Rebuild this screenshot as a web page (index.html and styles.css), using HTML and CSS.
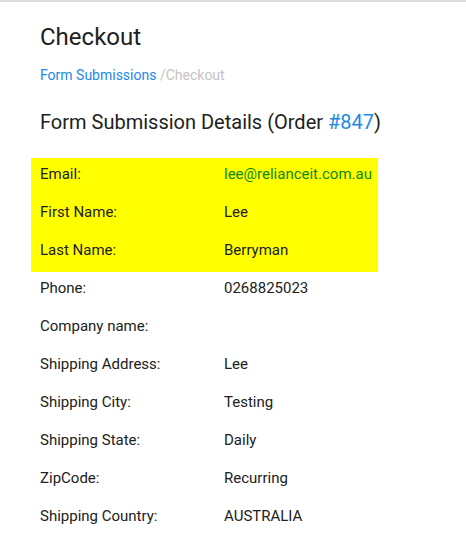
FILE: index.html
```html
<!DOCTYPE html>
<html lang="en">
<head>
<meta charset="utf-8">
<title>Checkout</title>
<link rel="stylesheet" href="styles.css">
</head>
<body>
<div class="topbar"></div>
<main class="page">
  <h1 class="title">Checkout</h1>
  <nav class="crumbs"><a class="crumb-link" href="#">Form Submissions</a> <span class="crumb-current">/Checkout</span></nav>
  <h2 class="subtitle">Form Submission Details (Order <a class="order-link" href="#">#847</a>)</h2>
  <table class="details">
    <tbody>
      <tr class="hl"><td class="label">Email:</td><td class="value email">lee@relianceit.com.au</td></tr>
      <tr class="hl"><td class="label">First Name:</td><td class="value">Lee</td></tr>
      <tr class="hl"><td class="label">Last Name:</td><td class="value">Berryman</td></tr>
      <tr><td class="label">Phone:</td><td class="value">0268825023</td></tr>
      <tr><td class="label">Company name:</td><td class="value"></td></tr>
      <tr><td class="label">Shipping Address:</td><td class="value">Lee</td></tr>
      <tr><td class="label">Shipping City:</td><td class="value">Testing</td></tr>
      <tr><td class="label">Shipping State:</td><td class="value">Daily</td></tr>
      <tr><td class="label">ZipCode:</td><td class="value">Recurring</td></tr>
      <tr><td class="label">Shipping Country:</td><td class="value">AUSTRALIA</td></tr>
    </tbody>
  </table>
</main>
</body>
</html>
```
FILE: styles.css
```css
html, body {
  margin: 0;
  padding: 0;
  background: #ffffff;
}
body {
  font-family: Roboto, "Liberation Sans", Arial, sans-serif;
  color: #212121;
}
.topbar {
  height: 2px;
  background: #dcdcdc;
}
.page {
  padding: 0 40px;
}
.title {
  margin: 21px 0 0;
  font-size: 24px;
  font-weight: 400;
  line-height: 29px;
  color: #212121;
}
.crumbs {
  margin-top: 13px;
  font-size: 14px;
  line-height: 21px;
}
.crumb-link {
  color: #1e88e5;
  text-decoration: none;
}
.crumb-current {
  color: #c4c4c4;
}
.subtitle {
  margin: 24px 0 0;
  font-size: 20px;
  font-weight: 400;
  line-height: 24px;
  color: #212121;
}
.order-link {
  color: #1e88e5;
  text-decoration: none;
}
.details {
  margin: 24px 0 0 -9px;
  border-collapse: collapse;
  border-spacing: 0;
  font-size: 15px;
  line-height: 22px;
}
.details td {
  padding: 5px 0 11px;
  vertical-align: top;
  white-space: nowrap;
}
.details .label {
  width: 184px;
  padding-left: 9px;
}
.details .value {
  width: 148px;
  padding-right: 6px;
}
.hl {
  background: #ffff00;
}
.email {
  color: #0c8a0c;
}
```
